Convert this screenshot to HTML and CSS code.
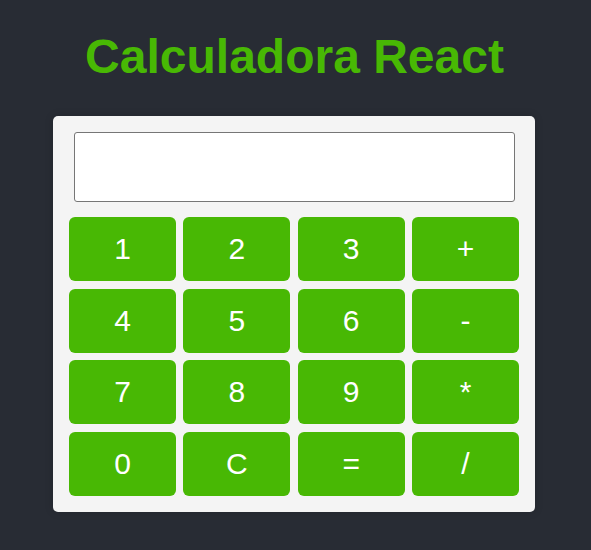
FILE: index.html
```html
<!DOCTYPE html>
<html lang="es">
<head>
<meta charset="utf-8">
<title>Calculadora React</title>
<link rel="stylesheet" href="styles.css">
</head>
<body>
<div class="app">
  <h1 class="title">Calculadora React</h1>
  <div class="calculator">
    <input class="display" type="text" readonly value="">
    <div class="keys">
      <button class="key">1</button>
      <button class="key">2</button>
      <button class="key">3</button>
      <button class="key">+</button>
      <button class="key">4</button>
      <button class="key">5</button>
      <button class="key">6</button>
      <button class="key">-</button>
      <button class="key">7</button>
      <button class="key">8</button>
      <button class="key">9</button>
      <button class="key">*</button>
      <button class="key">0</button>
      <button class="key">C</button>
      <button class="key">=</button>
      <button class="key">/</button>
    </div>
  </div>
</div>
</body>
</html>
```
FILE: styles.css
```css
html, body {
  margin: 0;
  padding: 0;
  background: #282c34;
  height: 100%;
}
body {
  font-family: "Liberation Sans", Arial, sans-serif;
}
.app {
  display: flex;
  flex-direction: column;
  align-items: flex-start;
}
.title {
  align-self: stretch;
  text-align: center;
  margin: 29px 2px 32px 0;
  font-size: 48px;
  line-height: 55px;
  font-weight: bold;
  color: #48b804;
}
.calculator {
  width: 482px;
  box-sizing: border-box;
  margin-left: 53px;
  padding: 16px;
  background: #f4f4f4;
  border-radius: 5px;
  box-shadow: 0 0 8px rgba(0, 0, 0, 0.15);
}
.display {
  display: block;
  box-sizing: border-box;
  width: 441px;
  height: 70px;
  margin: 0 4px 15px 5px;
  border: 1px solid #767676;
  border-radius: 3px;
  background: #fff;
  font-family: "Liberation Sans", Arial, sans-serif;
  font-size: 28px;
  text-align: right;
  padding: 0 10px;
  outline: none;
}
.keys {
  display: grid;
  grid-template-columns: repeat(4, 1fr);
  grid-auto-rows: 64px;
  column-gap: 7.33px;
  row-gap: 7.5px;
}
.key {
  border: none;
  border-radius: 6px;
  background: #48b804;
  color: #fff;
  font-family: "Liberation Sans", Arial, sans-serif;
  font-size: 30px;
  padding: 0;
  cursor: pointer;
}
```
